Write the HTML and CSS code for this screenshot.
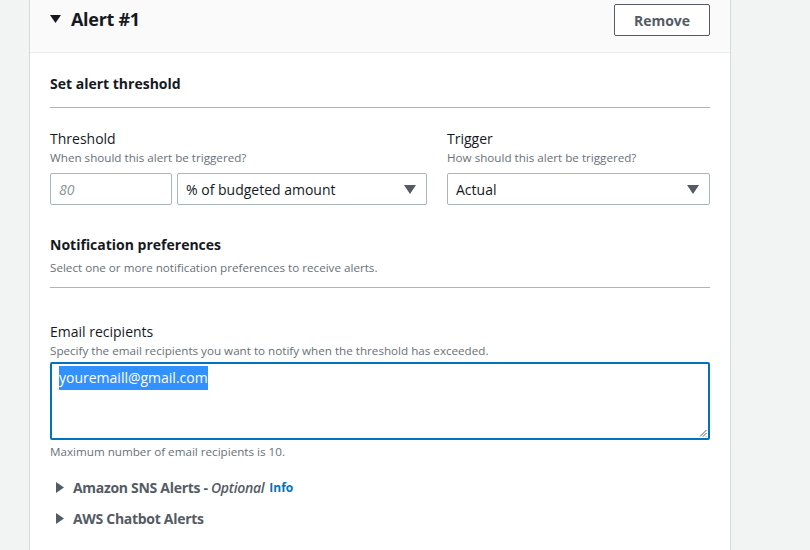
FILE: index.html
```html
<!DOCTYPE html>
<html>
<head>
<meta charset="utf-8">
<link rel="stylesheet" href="styles.css">
</head>
<body>
<div class="panel">
  <div class="panel-header">
    <div class="title">
      <svg class="caret-down" width="11" height="8" viewBox="0 0 11 8"><polygon points="0,0 11,0 5.5,8" fill="#16191f"/></svg>
      <span>Alert #1</span>
    </div>
    <button class="btn">Remove</button>
  </div>
  <div class="panel-body">
    <div class="section-head">
      <h3>Set alert threshold</h3>
    </div>
    <div class="row">
      <div class="field">
        <div class="label">Threshold</div>
        <div class="desc">When should this alert be triggered?</div>
        <div class="controls">
          <div class="input placeholder">80</div>
          <div class="select">% of budgeted amount<svg width="12" height="9" viewBox="0 0 12 9"><polygon points="0,0 12,0 6,9" fill="#545b64"/></svg></div>
        </div>
      </div>
      <div class="field">
        <div class="label">Trigger</div>
        <div class="desc">How should this alert be triggered?</div>
        <div class="controls">
          <div class="select full">Actual<svg width="12" height="9" viewBox="0 0 12 9"><polygon points="0,0 12,0 6,9" fill="#545b64"/></svg></div>
        </div>
      </div>
    </div>
    <div class="section-head notif">
      <h3>Notification preferences</h3>
      <div class="desc">Select one or more notification preferences to receive alerts.</div>
    </div>
    <div class="email">
      <div class="label">Email recipients</div>
      <div class="desc">Specify the email recipients you want to notify when the threshold has exceeded.</div>
      <div class="textarea">
        <span class="sel">youremaill@gmail.com</span>
        <svg class="grip" width="8" height="8" viewBox="0 0 8 8"><path d="M7.5 1 L1 7.5 M7.5 4 L4 7.5 M7.5 7 L7 7.5" stroke="#545b64" stroke-width="1" fill="none"/></svg>
      </div>
      <div class="desc note">Maximum number of email recipients is 10.</div>
    </div>
    <div class="expander">
      <svg width="8" height="11" viewBox="0 0 8 11"><polygon points="0,0 8,5.5 0,11" fill="#545b64"/></svg>
      <span>Amazon SNS Alerts - <i>Optional</i></span><a class="info">Info</a>
    </div>
    <div class="expander">
      <svg width="8" height="11" viewBox="0 0 8 11"><polygon points="0,0 8,5.5 0,11" fill="#545b64"/></svg>
      <span>AWS Chatbot Alerts</span>
    </div>
  </div>
</div>
</body>
</html>
```

FILE: styles.css
```css
* { box-sizing: border-box; }
html, body { margin: 0; padding: 0; }
body {
  background: #f2f3f3;
  font-family: "Open Sans", "Noto Sans", sans-serif;
  color: #16191f;
  height: 550px;
  overflow: hidden;
}
.panel {
  margin-left: 29px;
  width: 702px;
  height: 560px;
  background: #fff;
  border-left: 1px solid #d5dbdb;
  border-right: 1px solid #d5dbdb;
}
.panel-header {
  height: 53px;
  background: #fafafa;
  border-bottom: 1px solid #eaeded;
  display: flex;
  justify-content: space-between;
  align-items: flex-start;
  padding: 4px 20px 0 20px;
}
.title {
  display: flex;
  align-items: center;
  gap: 10px;
  height: 30px;
  font-size: 18px;
  font-weight: 700;
  letter-spacing: -0.3px;
}
.btn {
  height: 32px;
  width: 96px;
  background: #fff;
  border: 1px solid #545b64;
  border-radius: 2px;
  color: #545b64;
  font-family: inherit;
  font-weight: 700;
  font-size: 14px;
  padding: 0;
}
.panel-body {
  padding: 0 20px;
}
.section-head {
  border-bottom: 1px solid #aab7b8;
  padding-top: 20px;
  padding-bottom: 12px;
}
.section-head h3 {
  margin: 0;
  font-size: 14px;
  font-weight: 700;
  line-height: 22px;
}
.section-head.notif { padding-top: 29px; padding-bottom: 11px; }
.section-head.notif .desc { margin-top: 4px; }
.row {
  display: grid;
  grid-template-columns: 377px 1fr;
  column-gap: 20px;
  padding-top: 20px;
}
.label {
  font-size: 14px;
  line-height: 22px;
}
.desc {
  font-size: 11.65px;
  line-height: 16px;
  color: #687078;
}
.controls {
  display: flex;
  gap: 5px;
  margin-top: 7px;
}
.input, .select {
  height: 32px;
  border: 1px solid #aab7b8;
  border-radius: 2px;
  font-size: 14px;
  display: flex;
  align-items: center;
  padding: 0 8px;
}
.input { width: 122px; }
.placeholder { color: #879596; font-style: italic; }
.select {
  flex: 1;
  justify-content: space-between;
  padding-right: 10px;
}
.email { padding-top: 33px; }
.textarea {
  position: relative;
  margin-top: 3px;
  height: 78px;
  border: 2px solid #0073bb;
  border-radius: 2px;
  padding: 3px 7px;
  font-size: 14px;
  line-height: 22px;
}
.sel {
  background: #3390ff;
  color: #fff;
  padding: 2px 0 3px;
}
.grip { position: absolute; right: 1px; bottom: 1px; }
.note { margin-top: 4px; }
.expander {
  display: flex;
  align-items: center;
  gap: 9px;
  margin-left: 6px;
  font-size: 14px;
  font-weight: 700;
  color: #545b64;
  height: 22px;
  letter-spacing: -0.3px;
}
.expander i { font-weight: 600; }
.email + .expander { margin-top: 16px; }
.expander + .expander { margin-top: 9px; }
.info {
  color: #0073bb;
  font-size: 12px;
  margin-left: -4px;
  letter-spacing: 0;
}
```
